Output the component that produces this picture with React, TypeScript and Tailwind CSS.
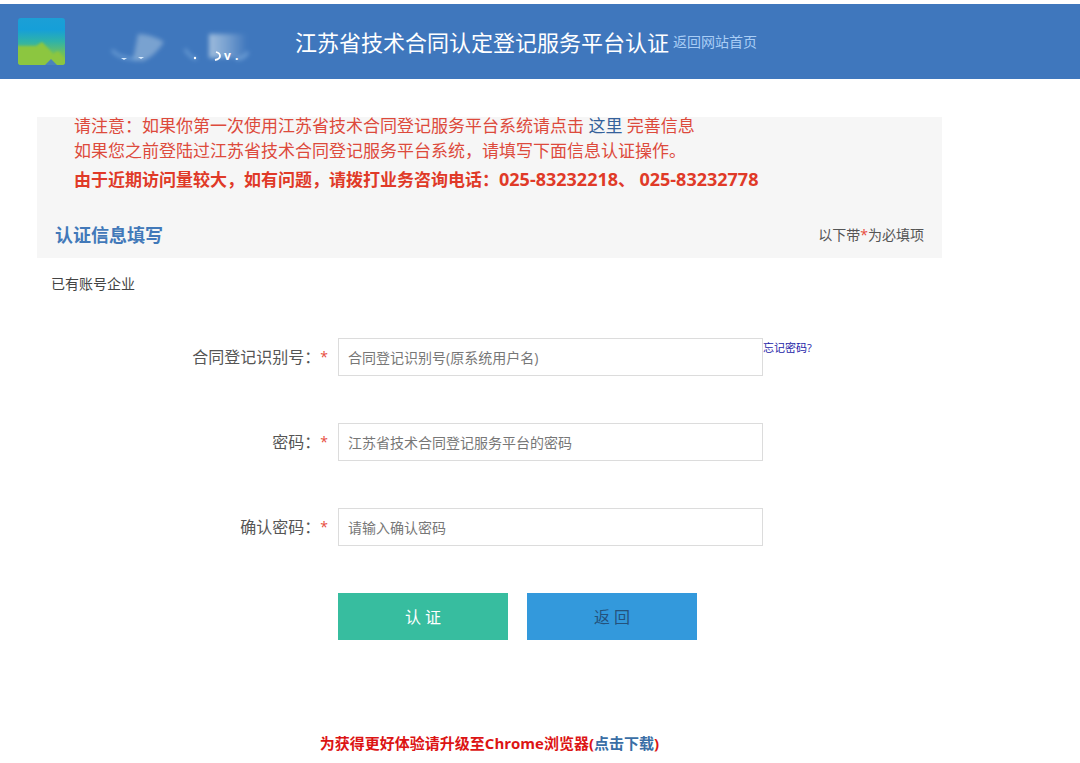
import React from "react";

type Field = {
  id: string;
  label: string;
  placeholder: string;
  type: string;
  forgot?: boolean;
};

const fields: Field[] = [
  {
    id: "account",
    label: "合同登记识别号：",
    placeholder: "合同登记识别号(原系统用户名)",
    type: "text",
    forgot: true,
  },
  {
    id: "password",
    label: "密码：",
    placeholder: "江苏省技术合同登记服务平台的密码",
    type: "password",
  },
  {
    id: "confirm",
    label: "确认密码：",
    placeholder: "请输入确认密码",
    type: "password",
  },
];

function Logo() {
  return (
    <svg width="260" height="60" viewBox="0 0 260 60" aria-hidden="true" className="shrink-0">
      <defs>
        <linearGradient id="sky" x1="0" y1="0" x2="0" y2="1">
          <stop offset="0" stopColor="#1c9fd6" />
          <stop offset="0.25" stopColor="#169fd8" />
          <stop offset="0.5" stopColor="#2fb3a8" />
          <stop offset="0.75" stopColor="#6cc060" />
          <stop offset="1" stopColor="#7cc355" />
        </linearGradient>
        <linearGradient id="fadeRight" x1="0" y1="0" x2="1" y2="0">
          <stop offset="0" stopColor="#a9c4e0" stopOpacity="0.9" />
          <stop offset="0.5" stopColor="#a9c4e0" stopOpacity="0.5" />
          <stop offset="1" stopColor="#a9c4e0" stopOpacity="0" />
        </linearGradient>
        <clipPath id="tile">
          <rect x="0" y="6" width="47" height="47" rx="3" />
        </clipPath>
        <filter id="soft" x="-30%" y="-30%" width="160%" height="160%">
          <feGaussianBlur stdDeviation="2" />
        </filter>
        <filter id="hill" x="-10%" y="-10%" width="120%" height="120%">
          <feGaussianBlur stdDeviation="1.2" />
        </filter>
      </defs>
      <g clipPath="url(#tile)">
        <rect x="0" y="6" width="47" height="47" fill="url(#sky)" />
        <path d="M-2 34L10 34L18 34L24 30L30 36L35 42L40 39L50 49V56H-2Z" fill="#8cc63f" filter="url(#hill)" />
      </g>
      <path d="M27 53L33 47L39 53Z" fill="#4a84bb" />
      <g filter="url(#soft)">
        <path d="M120 22Q133 22 146 30Q137 44 125 49L115 48Z" fill="#88acd4" opacity="0.8" />
        <path d="M94 38Q101 47 119 47" fill="none" stroke="#8dbbe8" strokeWidth="3" opacity="0.5" />
        <path d="M167 37Q172 46 179 47" fill="none" stroke="#8dbbe8" strokeWidth="3" opacity="0.5" />
        <rect x="191" y="22" width="38" height="24" fill="url(#fadeRight)" />
        <path d="M218 47Q226 47 230 40" fill="none" stroke="#8dbbe8" strokeWidth="3" opacity="0.6" />
      </g>
      <path d="M103 46h6l-3 2zM120 45h6l-3 2z" fill="#d8ecff" />
      <circle cx="177" cy="46" r="1.2" fill="#fff" />
      <path d="M198 40Q202 41 202 44Q202 47 197 48" fill="none" stroke="#fff" strokeWidth="1.8" />
      <text x="206" y="48" fill="#fff" fontSize="12" fontWeight="700" fontFamily="'Open Sans', sans-serif">
        v
      </text>
      <text x="217" y="48" fill="#fff" fontSize="12" fontWeight="700" fontFamily="'Open Sans', sans-serif">
        .
      </text>
    </svg>
  );
}

export default function App() {
  return (
    <div className="bg-white pt-1 font-['Open_Sans','Noto_Sans_CJK_SC',sans-serif] text-[#555]">
      <header className="flex h-[75px] items-center bg-[#3f77bd] pl-[18px]">
        <Logo />
        <h1 className="ml-[17px] text-[22px] leading-8 whitespace-nowrap text-white">
          江苏省技术合同认定登记服务平台认证
        </h1>
        <a href="#home" className="ml-1 text-sm whitespace-nowrap text-[#a9cdf5]">
          返回网站首页
        </a>
      </header>

      <main className="w-full max-w-[979px] px-[37px] pt-[38px]">
        <section className="flow-root bg-[#f6f6f6] text-[#dd4a3c]">
          <div className="-mt-1 pl-[37px] text-[17px] leading-[25px]">
            <p>
              请注意：如果你第一次使用江苏省技术合同登记服务平台系统请点击{" "}
              <a href="#first" className="text-[#34619b]">
                这里
              </a>{" "}
              完善信息
            </p>
            <p>如果您之前登陆过江苏省技术合同登记服务平台系统，请填写下面信息认证操作。</p>
            <p className="pt-1 font-bold text-[#e03a28]">
              由于近期访问量较大，如有问题，请拨打业务咨询电话：
              <span className="text-lg leading-[25px]">025-83232218</span>、{" "}
              <span className="text-lg leading-[25px]">025-83232778</span>
            </p>
          </div>
          <div className="mt-5 flex h-[46px] items-center justify-between px-[18px]">
            <h2 className="text-lg font-bold text-[#4279b9]">认证信息填写</h2>
            <p className="text-sm text-[#555]">
              以下带<span className="text-[#e74c3c]">*</span>为必填项
            </p>
          </div>
        </section>

        <p className="pt-4 pl-[14px] text-sm text-[#444]">已有账号企业</p>

        <form className="mt-11" onSubmit={(e) => e.preventDefault()}>
          <div className="flex flex-col gap-[47px]">
            {fields.map((f) => (
              <div key={f.id} className="grid grid-cols-[301fr_425fr_179fr]">
                <label htmlFor={f.id} className="flex items-center justify-end pr-[10px] text-base">
                  {f.label}
                  <span className="text-sm text-[#e74c3c]">*</span>
                </label>
                <input
                  id={f.id}
                  type={f.type}
                  placeholder={f.placeholder}
                  className="h-[38px] w-full border border-[#dcdcdc] bg-white px-[9px] text-sm text-[#555] outline-none placeholder:text-[#777]"
                />
                {f.forgot && (
                  <a href="#forgot" className="self-start text-[11px] leading-5 text-[#2424a8]">
                    忘记密码?
                  </a>
                )}
              </div>
            ))}
          </div>
          <div className="mt-[47px] grid grid-cols-[301fr_170fr_19fr_170fr_245fr]">
            <button type="submit" className="col-start-2 h-[47px] bg-[#37bd9f] text-base text-white">
              认 证
            </button>
            <button type="button" className="col-start-4 h-[47px] bg-[#3399dc] text-base text-[#24527c]">
              返 回
            </button>
          </div>
        </form>

        <footer className="pt-[92px] text-center text-[15px] leading-[22px] font-bold text-[#dc1414]">
          为获得更好体验请升级至Chrome浏览器(
          <a href="#download" className="text-[#3a6ea5]">
            点击下载
          </a>
          )
        </footer>
      </main>
    </div>
  );
}
